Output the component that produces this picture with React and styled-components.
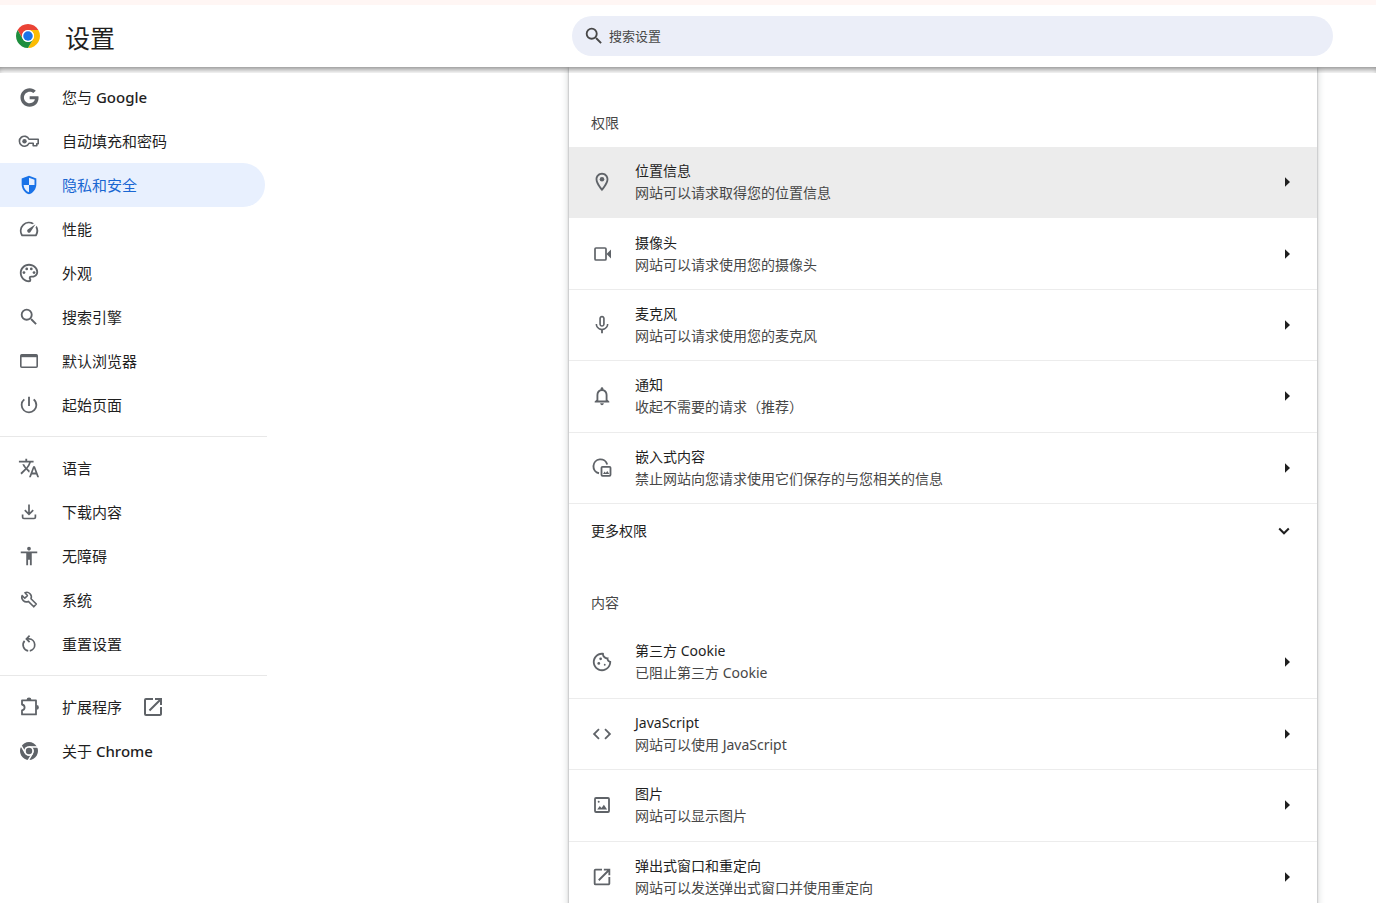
import React from "react";
import styled, { createGlobalStyle } from "styled-components";
import {
  MdOutlineSpeed, MdOutlinePalette, MdSearch,
  MdPowerSettingsNew, MdTranslate, MdAccessibility,
  MdOutlineLocationOn, MdMicNone, MdNotificationsNone,
  MdOutlineCookie, MdCode, MdOpenInNew,
} from "react-icons/md";
import { FaGoogle } from "react-icons/fa";

const GlobalStyle = createGlobalStyle`
  *, *::before, *::after { box-sizing: border-box; }
  body {
    margin: 0;
    background: #fff;
    color: #1f1f1f;
    font-family: "Noto Sans", "Noto Sans CJK SC", sans-serif;
    font-size: 14px;
    line-height: 22px;
  }
`;

const Shell = styled.div`
  display: flex;
  flex-direction: column;
  height: 100vh;
  border-top: 5px solid #fff6f4;
`;

const Toolbar = styled.header`
  position: relative;
  z-index: 1;
  flex: none;
  display: grid;
  grid-template-columns: 572px minmax(0, 1fr);
  align-items: center;
  height: 62px;
  padding-right: 43px;
  background: #fff;

  &::after {
    content: "";
    position: absolute;
    top: 100%;
    left: 0;
    right: 0;
    height: 6px;
    box-shadow: inset 0 5px 6px -3px rgba(0, 0, 0, 0.5);
    pointer-events: none;
  }
`;

const Brand = styled.div`
  display: flex;
  align-items: center;
  gap: 25px;
  padding-left: 16px;
`;

const Title = styled.h1`
  margin: 0;
  padding-top: 3px;
  font-size: 25px;
  line-height: 32px;
  font-weight: 400;
`;

const SearchBox = styled.label`
  display: flex;
  align-items: center;
  gap: 4px;
  height: 40px;
  padding: 0 12px 0 11px;
  border-radius: 20px;
  background: #ebeef8;
  color: #474747;

  svg { flex: none; }
`;

const SearchInput = styled.input`
  flex: 1;
  min-width: 0;
  padding: 0;
  border: 0;
  outline: 0;
  background: none;
  color: #1f1f1f;
  font: inherit;
  font-size: 13px;

  &::placeholder { color: #474747; opacity: 1; }
`;

const Columns = styled.div`
  flex: 1;
  min-height: 0;
  display: grid;
  grid-template-columns: 267px minmax(0, 1fr);
`;

const Sidebar = styled.nav`
  padding-top: 8px;
  overflow: hidden;
`;

const NavGroup = styled.ul`
  margin: 0;
  padding: 0;
  list-style: none;

  & + & {
    margin-top: 9px;
    padding-top: 9px;
    border-top: 1px solid #e8e8e8;
  }
`;

const NavLink = styled.a`
  display: flex;
  align-items: center;
  gap: 22px;
  height: 44px;
  margin-right: 2px;
  padding-left: 18px;
  border-radius: 0 22px 22px 0;
  background: ${(p) => (p.$active ? "#e8f0fe" : "transparent")};
  color: ${(p) => (p.$active ? "#1967d2" : "#1f1f1f")};
  font-size: 15px;
  text-decoration: none;
`;

const LatinWord = styled.span`
  font-weight: 500;
`;

const ExternalLabel = styled.span`
  display: flex;
  align-items: center;
  gap: 20px;
`;

const IconSlot = styled.span`
  flex: none;
  display: flex;
  align-items: center;
  justify-content: center;
  width: 22px;
  height: 22px;
  color: ${(p) => (p.$active ? "#1a73e8" : "#5f6368")};

  svg { flex: none; }
`;

const Content = styled.main`
  min-width: 0;
  padding: 0 59px 0 302px;
  overflow-y: auto;
  scrollbar-width: none;
`;

const Card = styled.div`
  padding: 11px 0 24px;
  background: #fff;
  box-shadow: 0 1px 2px rgba(60, 64, 67, 0.5), 0 2px 6px 2px rgba(60, 64, 67, 0.15);
`;

const SectionTitle = styled.h2`
  margin: 0;
  padding: 34px 22px 13px;
  color: #474747;
  font-size: 14px;
  line-height: 22px;
  font-weight: 400;
`;

const PermissionList = styled.ul`
  display: grid;
  grid-auto-rows: 1fr;
  min-height: ${(p) => p.$minHeight}px;
  margin: 0;
  padding: 0;
  list-style: none;

  li { display: flex; }
`;

const Row = styled.button`
  flex: 1;
  display: flex;
  align-items: center;
  gap: 22px;
  min-height: 71px;
  padding: 0 22px;
  border: 0;
  border-bottom: 1px solid #ececec;
  background: ${(p) => (p.$hover ? "#ececec" : "transparent")};
  color: #1f1f1f;
  font: inherit;
  text-align: left;
`;

const RowText = styled.span`
  flex: 1;
  display: flex;
  flex-direction: column;
`;

const RowDetail = styled.span`
  color: #474747;
`;

const ExpandRow = styled.button`
  display: flex;
  align-items: center;
  justify-content: space-between;
  width: 100%;
  height: 54px;
  padding: 0 22px;
  border: 0;
  background: none;
  color: #1f1f1f;
  font: inherit;
`;

const Drawing = ({ size = 22, box = 22, children }) => (
  <svg width={size} height={size} viewBox={`0 0 ${box} ${box}`} fill="none" aria-hidden="true">
    {children}
  </svg>
);

const ChromeLogo = () => (
  <Drawing size={24} box={48}>
    <path fill="#ea4335" d="M24 12h20.78A24 24 0 0 0 3.22 12l10.39 18A12 12 0 0 1 24 12z" />
    <path fill="#fbbc04" d="M34.39 30 24 48A24 24 0 0 0 44.78 12H24a12 12 0 0 1 10.39 18z" />
    <path fill="#1e8e3e" d="M13.61 30 3.22 12A24 24 0 0 0 24 48l10.39-18a12 12 0 0 1-20.78 0z" />
    <circle cx="24" cy="24" r="12" fill="#fff" />
    <circle cx="24" cy="24" r="9.5" fill="#1a73e8" />
  </Drawing>
);

const ChromeMono = () => (
  <Drawing size={18} box={48}>
    <path fill="currentColor" d="M24 12h20.78A24 24 0 0 0 3.22 12l10.39 18A12 12 0 0 1 24 12z" />
    <path fill="currentColor" d="M34.39 30 24 48A24 24 0 0 0 44.78 12H24a12 12 0 0 1 10.39 18z" />
    <path fill="currentColor" d="M13.61 30 3.22 12A24 24 0 0 0 24 48l10.39-18a12 12 0 0 1-20.78 0z" />
    <path stroke="#fff" strokeWidth="4" d="M24 13h24M14.500 29.500 2.500 8.700M33.500 29.500 21.500 50.300" />
    <circle cx="24" cy="24" r="13" fill="#fff" />
    <circle cx="24" cy="24" r="8.500" fill="currentColor" />
  </Drawing>
);

const KeyIcon = () => (
  <Drawing>
    <path
      stroke="currentColor"
      strokeWidth="1.6"
      strokeLinejoin="round"
      d="M11 9.200h9.200v4.600h-1.400v2h-3.600v-2.600H11a5 5 0 1 1 0-4z"
    />
    <circle cx="6.500" cy="11.200" r="2.200" fill="currentColor" />
  </Drawing>
);

const ShieldIcon = () => (
  <Drawing box={24}>
    <path
      fill="currentColor"
      fillRule="evenodd"
      d="M12 2 4 5v6.100c0 5.050 3.400 9.760 8 10.900 4.600-1.140 8-5.850 8-10.900V5l-8-3zm0 2.150 6 2.250V12h-6V4.150zM12 12v7.900c-3.200-1.100-5.600-4.300-5.950-7.900H12z"
    />
  </Drawing>
);

const WindowIcon = () => (
  <Drawing>
    <rect x="2.800" y="4.800" width="16.400" height="12.400" rx="1" stroke="currentColor" strokeWidth="1.600" />
    <path stroke="currentColor" strokeWidth="2.400" d="M3 6h16" />
  </Drawing>
);

const DownloadIcon = () => (
  <Drawing>
    <g stroke="currentColor" strokeWidth="1.700">
      <path d="M11 3.500v9.500M6.800 9.200 11 13.400l4.200-4.200" />
      <path d="M4.600 13.500v2.700q0 1.300 1.300 1.300h10.200q1.300 0 1.300-1.300v-2.700" />
    </g>
  </Drawing>
);

const WrenchIcon = () => (
  <Drawing>
    <path
      stroke="currentColor"
      strokeWidth="1.600"
      strokeLinejoin="round"
      d="M7 3.700a4.600 4.600 0 0 1 6 6l5.300 5.300-2.500 2.800-5.500-5.400a4.600 4.600 0 0 1-6.200-5.800l2.700 2.700L9.400 6.600z"
    />
  </Drawing>
);

const ResetIcon = () => (
  <Drawing>
    <g stroke="currentColor" strokeWidth="1.700">
      <path d="M10.200 17.800A6 6 0 0 1 6.600 7.900" />
      <path d="M11.800 17.800A6 6 0 0 0 11 5.900H9" />
      <path d="M11.600 2.600 8.400 5.900l3.200 3.300" />
    </g>
  </Drawing>
);

const ExtensionIcon = () => (
  <Drawing>
    <path
      stroke="currentColor"
      strokeWidth="1.800"
      strokeLinejoin="round"
      d="M4 4.400h14v14H4v-4c1.700-.4 2.600-1.500 2.600-2.900S5.700 8.900 4 8.500z"
    />
    <path fill="currentColor" d="M8.600 4a2.400 2.400 0 0 1 4.800 0zM18.500 9a2.400 2.400 0 0 1 0 4.800z" />
  </Drawing>
);

const CameraIcon = () => (
  <Drawing>
    <rect x="4" y="5" width="11" height="12" rx="1" stroke="currentColor" strokeWidth="1.700" />
    <path fill="currentColor" d="M15.500 11 20 6.500v9z" />
  </Drawing>
);

const EmbeddedIcon = () => (
  <Drawing>
    <path stroke="currentColor" strokeWidth="1.900" d="M8 16.200A7 7 0 1 1 16.200 7.500" />
    <rect x="10.500" y="9.800" width="9" height="9" rx="1" stroke="currentColor" strokeWidth="1.800" />
    <path fill="currentColor" d="m12 17 1.600-2.500 1.200 1.500 1.500-2 2 3z" />
  </Drawing>
);

const ImageIcon = () => (
  <Drawing>
    <rect x="4" y="4" width="14" height="14" rx="1" stroke="currentColor" strokeWidth="1.800" />
    <circle cx="7.700" cy="7.700" r="1" fill="currentColor" />
    <path fill="currentColor" d="m6.200 15.500 2.600-3.400 1.700 2 2.400-3.300 3.200 4.700z" />
  </Drawing>
);

const ArrowRight = () => (
  <Drawing>
    <path fill="#1f1f1f" d="m12 6.300 5 4.700-5 4.700z" />
  </Drawing>
);

const ChevronDown = () => (
  <Drawing>
    <path stroke="#1f1f1f" strokeWidth="2" d="m6.200 8.500 4.800 4.800 4.800-4.800" />
  </Drawing>
);

const navGroups = [
  [
    { label: "您与 ", latin: "Google", icon: <FaGoogle size={19} /> },
    { label: "自动填充和密码", icon: <KeyIcon /> },
    { label: "隐私和安全", icon: <ShieldIcon />, active: true },
    { label: "性能", icon: <MdOutlineSpeed size={22} /> },
    { label: "外观", icon: <MdOutlinePalette size={22} /> },
    { label: "搜索引擎", icon: <MdSearch size={22} /> },
    { label: "默认浏览器", icon: <WindowIcon /> },
    { label: "起始页面", icon: <MdPowerSettingsNew size={22} /> },
  ],
  [
    { label: "语言", icon: <MdTranslate size={22} /> },
    { label: "下载内容", icon: <DownloadIcon /> },
    { label: "无障碍", icon: <MdAccessibility size={22} /> },
    { label: "系统", icon: <WrenchIcon /> },
    { label: "重置设置", icon: <ResetIcon /> },
  ],
  [
    { label: "扩展程序", icon: <ExtensionIcon />, external: true },
    { label: "关于 ", latin: "Chrome", icon: <ChromeMono /> },
  ],
];

const permissions = [
  { title: "位置信息", detail: "网站可以请求取得您的位置信息", icon: <MdOutlineLocationOn size={22} />, hover: true },
  { title: "摄像头", detail: "网站可以请求使用您的摄像头", icon: <CameraIcon /> },
  { title: "麦克风", detail: "网站可以请求使用您的麦克风", icon: <MdMicNone size={22} /> },
  { title: "通知", detail: "收起不需要的请求（推荐）", icon: <MdNotificationsNone size={22} /> },
  { title: "嵌入式内容", detail: "禁止网站向您请求使用它们保存的与您相关的信息", icon: <EmbeddedIcon /> },
];

const contents = [
  { title: "第三方 Cookie", detail: "已阻止第三方 Cookie", icon: <MdOutlineCookie size={22} /> },
  { title: "JavaScript", detail: "网站可以使用 JavaScript", icon: <MdCode size={22} /> },
  { title: "图片", detail: "网站可以显示图片", icon: <ImageIcon /> },
  { title: "弹出式窗口和重定向", detail: "网站可以发送弹出式窗口并使用重定向", icon: <MdOpenInNew size={22} /> },
];

const Permissions = ({ items, minHeight }) => (
  <PermissionList $minHeight={minHeight}>
    {items.map((item) => (
      <li key={item.title}>
        <Row type="button" $hover={item.hover}>
          <IconSlot>{item.icon}</IconSlot>
          <RowText>
            <span>{item.title}</span>
            <RowDetail>{item.detail}</RowDetail>
          </RowText>
          <ArrowRight />
        </Row>
      </li>
    ))}
  </PermissionList>
);

export default function App() {
  return (
    <>
      <GlobalStyle />
      <Shell lang="zh-CN">
        <Toolbar>
          <Brand>
            <ChromeLogo />
            <Title>设置</Title>
          </Brand>
          <SearchBox>
            <MdSearch size={22} aria-hidden="true" />
            <SearchInput type="text" placeholder="搜索设置" aria-label="搜索设置" />
          </SearchBox>
        </Toolbar>
        <Columns>
          <Sidebar>
            {navGroups.map((group) => (
              <NavGroup key={group[0].label}>
                {group.map((item) => (
                  <li key={item.label}>
                    <NavLink href="#" $active={item.active}>
                      <IconSlot $active={item.active}>{item.icon}</IconSlot>
                      {item.external ? (
                        <ExternalLabel>
                          {item.label}
                          <IconSlot>
                            <MdOpenInNew size={24} />
                          </IconSlot>
                        </ExternalLabel>
                      ) : (
                        <span>
                          {item.label}
                          {item.latin && <LatinWord>{item.latin}</LatinWord>}
                        </span>
                      )}
                    </NavLink>
                  </li>
                ))}
              </NavGroup>
            ))}
          </Sidebar>
          <Content>
            <Card>
              <SectionTitle>权限</SectionTitle>
              <Permissions items={permissions} minHeight={357} />
              <ExpandRow type="button" aria-expanded="false">
                更多权限
                <ChevronDown />
              </ExpandRow>
              <SectionTitle>内容</SectionTitle>
              <Permissions items={contents} minHeight={286} />
            </Card>
          </Content>
        </Columns>
      </Shell>
    </>
  );
}
